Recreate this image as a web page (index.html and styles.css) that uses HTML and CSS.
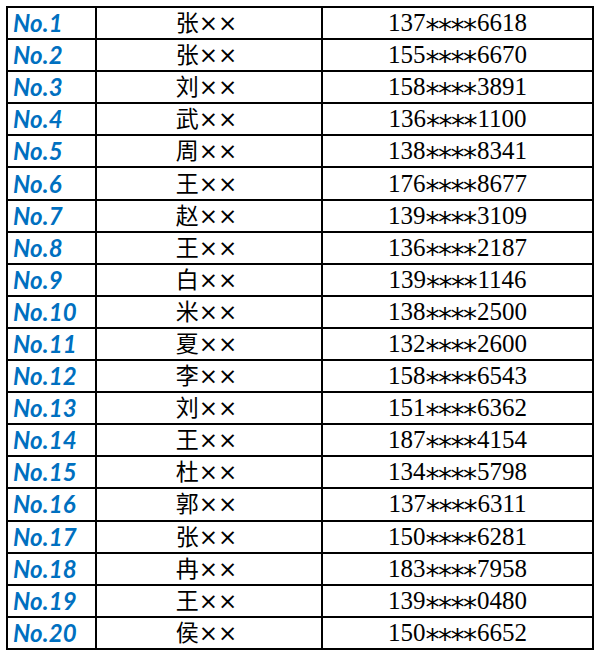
FILE: index.html
```html
<!DOCTYPE html>
<html lang="zh-CN">
<head>
<meta charset="utf-8">
<title>名单</title>
<link rel="stylesheet" href="styles.css">
</head>
<body>
<table class="list">
<colgroup><col class="c-no"><col class="c-name"><col class="c-phone"></colgroup>
<tbody>
<tr><td class="no">No.1</td><td class="name">张××</td><td class="phone">137<span class="mask">****</span>6618</td></tr>
<tr><td class="no">No.2</td><td class="name">张××</td><td class="phone">155<span class="mask">****</span>6670</td></tr>
<tr><td class="no">No.3</td><td class="name">刘××</td><td class="phone">158<span class="mask">****</span>3891</td></tr>
<tr><td class="no">No.4</td><td class="name">武××</td><td class="phone">136<span class="mask">****</span>1100</td></tr>
<tr><td class="no">No.5</td><td class="name">周××</td><td class="phone">138<span class="mask">****</span>8341</td></tr>
<tr><td class="no">No.6</td><td class="name">王××</td><td class="phone">176<span class="mask">****</span>8677</td></tr>
<tr><td class="no">No.7</td><td class="name">赵××</td><td class="phone">139<span class="mask">****</span>3109</td></tr>
<tr><td class="no">No.8</td><td class="name">王××</td><td class="phone">136<span class="mask">****</span>2187</td></tr>
<tr><td class="no">No.9</td><td class="name">白××</td><td class="phone">139<span class="mask">****</span>1146</td></tr>
<tr><td class="no">No.10</td><td class="name">米××</td><td class="phone">138<span class="mask">****</span>2500</td></tr>
<tr><td class="no">No.11</td><td class="name">夏××</td><td class="phone">132<span class="mask">****</span>2600</td></tr>
<tr><td class="no">No.12</td><td class="name">李××</td><td class="phone">158<span class="mask">****</span>6543</td></tr>
<tr><td class="no">No.13</td><td class="name">刘××</td><td class="phone">151<span class="mask">****</span>6362</td></tr>
<tr><td class="no">No.14</td><td class="name">王××</td><td class="phone">187<span class="mask">****</span>4154</td></tr>
<tr><td class="no">No.15</td><td class="name">杜××</td><td class="phone">134<span class="mask">****</span>5798</td></tr>
<tr><td class="no">No.16</td><td class="name">郭××</td><td class="phone">137<span class="mask">****</span>6311</td></tr>
<tr><td class="no">No.17</td><td class="name">张××</td><td class="phone">150<span class="mask">****</span>6281</td></tr>
<tr><td class="no">No.18</td><td class="name">冉××</td><td class="phone">183<span class="mask">****</span>7958</td></tr>
<tr><td class="no">No.19</td><td class="name">王××</td><td class="phone">139<span class="mask">****</span>0480</td></tr>
<tr><td class="no">No.20</td><td class="name">侯××</td><td class="phone">150<span class="mask">****</span>6652</td></tr>
</tbody>
</table>
</body>
</html>
```

FILE: styles.css
```css
html, body {
  margin: 0;
  padding: 0;
  background: #ffffff;
}

body {
  padding: 6px 0 0 6px;
}

.list {
  border-collapse: collapse;
  table-layout: fixed;
  width: 588px;
}

.c-no { width: 89px; }
.c-name { width: 226px; }
.c-phone { width: 271px; }

.list tr {
  height: 32.1px;
}

.list td {
  border: 2px solid #000000;
  padding: 0;
  vertical-align: middle;
  white-space: nowrap;
  line-height: 20px;
}

.no {
  font-family: "Lato", "Open Sans", sans-serif;
  font-weight: 700;
  font-style: italic;
  font-size: 24px;
  letter-spacing: 0.2px;
  color: #0070c0;
  padding-left: 5px !important;
  text-align: left;
}

.name {
  font-family: "DejaVu Sans", "Noto Sans CJK SC", sans-serif;
  font-size: 23px;
  color: #000000;
  text-align: center;
  padding-right: 5px !important;
}

.phone {
  font-family: "Liberation Serif", serif;
  font-size: 25px;
  color: #000000;
  text-align: center;
}

.mask {
  font-family: "DejaVu Sans", sans-serif;
  font-size: 28px;
  letter-spacing: -1.5px;
  margin-right: 1.5px;
  line-height: 0;
  vertical-align: -8px;
}
```
